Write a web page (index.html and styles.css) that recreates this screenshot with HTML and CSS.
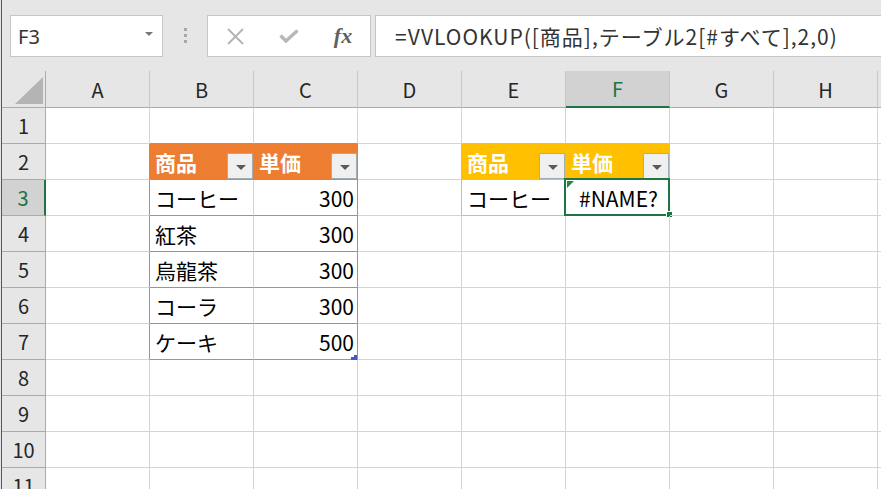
FILE: index.html
```html
<!doctype html>
<html lang="ja">
  <head>
    <meta charset="UTF-8" />
    <meta name="viewport" content="width=device-width, initial-scale=1.0" />
    <title>VLOOKUP</title>
    <link rel="stylesheet" href="styles.css">
  </head>

  <body>
    <div class="app">
      <div class="toolbar">
        <div class="name-box">
          <span>F3</span>
          <span class="caret"></span>
        </div>
        <div class="grip"><i></i><i></i><i></i></div>
        <div class="fx-buttons">
          <span class="fx-btn">
            <svg width="17" height="17" viewBox="0 0 17 17">
              <path d="M1 1 L16 16 M16 1 L1 16" stroke="#b3b3b3" stroke-width="1.8" fill="none" />
            </svg>
          </span>
          <span class="fx-btn">
            <svg width="20" height="14" viewBox="0 0 20 14">
              <path d="M1.5 6.5 L7 12 L18.5 1.5" stroke="#b8b8b8" stroke-width="3.4" fill="none" />
            </svg>
          </span>
          <span class="fx-btn fx-label">fx</span>
        </div>
        <div class="formula">=VVLOOKUP([商品],テーブル2[#すべて],2,0)</div>
      </div>

      <div class="sheet">
        <div class="row head">
          <div class="cell corner">
            <svg width="28" height="27" viewBox="0 0 28 27"><polygon points="28,0 28,27 0,27" fill="#b4b4b4" /></svg>
          </div>
          <div class="cell">A</div>
          <div class="cell">B</div>
          <div class="cell">C</div>
          <div class="cell">D</div>
          <div class="cell">E</div>
          <div class="cell col-active">F</div>
          <div class="cell">G</div>
          <div class="cell">H</div>
          <div class="cell"></div>
        </div>

        <div class="row">
          <div class="cell rh">1</div>
          <div class="cell"></div>
          <div class="cell ob"></div>
          <div class="cell ob"></div>
          <div class="cell"></div>
          <div class="cell yb"></div>
          <div class="cell yb"></div>
          <div class="cell"></div>
          <div class="cell"></div>
          <div class="cell"></div>
        </div>

        <div class="row">
          <div class="cell rh">2</div>
          <div class="cell or"></div>
          <div class="cell thead orange">商品<span class="filter"></span></div>
          <div class="cell thead orange">単価<span class="filter"></span></div>
          <div class="cell yr"></div>
          <div class="cell thead gold">商品<span class="filter"></span></div>
          <div class="cell thead gold">単価<span class="filter"></span></div>
          <div class="cell"></div>
          <div class="cell"></div>
          <div class="cell"></div>
        </div>

        <div class="row">
          <div class="cell rh row-active">3</div>
          <div class="cell or"></div>
          <div class="cell ob">コーヒー</div>
          <div class="cell ob or num">300</div>
          <div class="cell yr"></div>
          <div class="cell yb">コーヒー</div>
          <div class="cell yb yr center selected">
            #NAME?
            <span class="err"></span>
            <span class="sel"></span>
            <span class="tgrip"></span>
            <span class="handle"></span>
          </div>
          <div class="cell"></div>
          <div class="cell"></div>
          <div class="cell"></div>
        </div>

        <div class="row">
          <div class="cell rh">4</div>
          <div class="cell or"></div>
          <div class="cell ob">紅茶</div>
          <div class="cell ob or num">300</div>
          <div class="cell"></div>
          <div class="cell"></div>
          <div class="cell"></div>
          <div class="cell"></div>
          <div class="cell"></div>
          <div class="cell"></div>
        </div>

        <div class="row">
          <div class="cell rh">5</div>
          <div class="cell or"></div>
          <div class="cell ob">烏龍茶</div>
          <div class="cell ob or num">300</div>
          <div class="cell"></div>
          <div class="cell"></div>
          <div class="cell"></div>
          <div class="cell"></div>
          <div class="cell"></div>
          <div class="cell"></div>
        </div>

        <div class="row">
          <div class="cell rh">6</div>
          <div class="cell or"></div>
          <div class="cell ob">コーラ</div>
          <div class="cell ob or num">300</div>
          <div class="cell"></div>
          <div class="cell"></div>
          <div class="cell"></div>
          <div class="cell"></div>
          <div class="cell"></div>
          <div class="cell"></div>
        </div>

        <div class="row">
          <div class="cell rh">7</div>
          <div class="cell or"></div>
          <div class="cell ob">ケーキ</div>
          <div class="cell ob or num resizable">500<span class="resize"></span></div>
          <div class="cell"></div>
          <div class="cell"></div>
          <div class="cell"></div>
          <div class="cell"></div>
          <div class="cell"></div>
          <div class="cell"></div>
        </div>

        <div class="row">
          <div class="cell rh">8</div>
          <div class="cell"></div><div class="cell"></div><div class="cell"></div>
          <div class="cell"></div><div class="cell"></div><div class="cell"></div>
          <div class="cell"></div><div class="cell"></div><div class="cell"></div>
        </div>

        <div class="row">
          <div class="cell rh">9</div>
          <div class="cell"></div><div class="cell"></div><div class="cell"></div>
          <div class="cell"></div><div class="cell"></div><div class="cell"></div>
          <div class="cell"></div><div class="cell"></div><div class="cell"></div>
        </div>

        <div class="row">
          <div class="cell rh">10</div>
          <div class="cell"></div><div class="cell"></div><div class="cell"></div>
          <div class="cell"></div><div class="cell"></div><div class="cell"></div>
          <div class="cell"></div><div class="cell"></div><div class="cell"></div>
        </div>

        <div class="row">
          <div class="cell rh">11</div>
          <div class="cell"></div><div class="cell"></div><div class="cell"></div>
          <div class="cell"></div><div class="cell"></div><div class="cell"></div>
          <div class="cell"></div><div class="cell"></div><div class="cell"></div>
        </div>
      </div>
    </div>
  </body>
</html>
```

FILE: styles.css
```css
/* General styles */
body {
  margin: 0;
  width: 881px;
  height: 489px;
  overflow: hidden;
  background: #e6e6e6;
  font-family: 'Noto Sans CJK JP', sans-serif;
}

.app {
  margin-left: 1px;
  border-left: 1px solid #217346;
  height: 489px;
}

/* Formula bar */
.toolbar {
  height: 71px;
  box-sizing: border-box;
  padding-top: 15px;
  display: flex;
  align-items: flex-start;
}

.name-box {
  margin-left: 8px;
  width: 153px;
  height: 42px;
  box-sizing: border-box;
  background: #fff;
  border: 1px solid #c6c6c6;
  display: flex;
  align-items: center;
  justify-content: space-between;
  padding: 0 9px 0 7px;
  font-family: 'Noto Sans', sans-serif;
  font-size: 20px;
  color: #333;
}

.caret {
  width: 0;
  height: 0;
  border-left: 4px solid transparent;
  border-right: 4px solid transparent;
  border-top: 4px solid #777;
  margin-bottom: 4px;
}

.grip {
  width: 44px;
  height: 42px;
  box-sizing: border-box;
  padding-top: 13px;
  display: flex;
  flex-direction: column;
  align-items: center;
  gap: 3px;
}

.grip i {
  width: 3px;
  height: 3px;
  background: #a6a6a6;
}

.fx-buttons {
  width: 164px;
  height: 42px;
  box-sizing: border-box;
  background: #fff;
  border: 1px solid #c6c6c6;
  display: flex;
}

.fx-btn {
  flex: 1;
  display: flex;
  align-items: center;
  justify-content: center;
}

.fx-label {
  font-family: 'Liberation Serif', serif;
  font-style: italic;
  font-weight: bold;
  font-size: 22px;
  color: #606060;
}

.formula {
  flex: 1;
  margin-left: 4px;
  margin-right: -2px;
  height: 42px;
  box-sizing: border-box;
  background: #fff;
  border: 1px solid #c6c6c6;
  padding-left: 19px;
  display: flex;
  align-items: center;
  font-size: 21px;
  letter-spacing: 1px;
  color: #333;
  white-space: nowrap;
}

/* Sheet grid */
.sheet {
  background: #fff;
}

.row {
  display: grid;
  grid-template-columns: 44px repeat(9, 104px);
  height: 36px;
}

.row.head {
  height: 37px;
}

.cell {
  position: relative;
  box-sizing: border-box;
  border-right: 1px solid #d4d4d4;
  border-bottom: 1px solid #d4d4d4;
  display: flex;
  align-items: center;
  padding: 0 3px 0 5px;
  font-size: 21px;
  color: #000;
  white-space: nowrap;
}

.head .cell {
  background: #e6e6e6;
  border-right-color: #c6c6c6;
  border-bottom-color: #ababab;
  justify-content: center;
  padding: 0;
  font-size: 20px;
  color: #262626;
}

.head .corner {
  border-right-color: #ababab;
  justify-content: flex-end;
  align-items: flex-end;
  padding: 0 2px 3px 0;
}

.head .corner svg {
  display: block;
}

.head .col-active {
  background: #d2d2d2;
  color: #217346;
  border-bottom: 2px solid #217346;
}

.rh {
  background: #e6e6e6;
  border-right-color: #ababab;
  border-bottom-color: #ababab;
  justify-content: center;
  padding: 0;
  font-size: 20px;
  color: #262626;
}

.rh.row-active {
  background: #d2d2d2;
  color: #217346;
  border-right: 2px solid #217346;
}

.num {
  justify-content: flex-end;
}

.center {
  justify-content: center;
}

/* table outlines: o = orange table, y = gold table */
.or { border-right-color: #ed7d31; }
.ob { border-bottom-color: #ed7d31; }
.yr { border-right-color: #ffc000; }
.yb { border-bottom-color: #ffc000; }

.thead {
  justify-content: space-between;
  padding-right: 0;
  color: #fff;
  font-weight: bold;
}

.thead.orange {
  background: #ed7d31;
  border-color: #ed7d31;
}

.thead.gold {
  background: #ffc000;
  border-color: #ffc000;
}

.filter {
  align-self: flex-end;
  width: 26px;
  height: 26px;
  box-sizing: border-box;
  border: 1px solid #a3abb3;
  background: #f0f0f0;
  display: flex;
  align-items: center;
  justify-content: center;
}

.filter::after {
  content: '';
  margin: 2px 0 0 2px;
  border-left: 5px solid transparent;
  border-right: 5px solid transparent;
  border-top: 5px solid #5a5a5a;
}

/* active cell */
.err {
  position: absolute;
  top: 1px;
  left: 1px;
  border-top: 7px solid #1e8a37;
  border-right: 7px solid transparent;
}

.sel {
  position: absolute;
  top: -2px;
  left: -2px;
  right: -1px;
  bottom: -1px;
  border: 2px solid #217346;
}

.handle {
  position: absolute;
  right: -4px;
  bottom: -3px;
  width: 7px;
  height: 7px;
  box-sizing: border-box;
  background: #217346;
  border: 1px solid #fff;
}

.tgrip {
  position: absolute;
  right: 4px;
  bottom: 2px;
  width: 4px;
  height: 4px;
  background: radial-gradient(circle, #4559c0 45%, transparent 50%) 0 0 / 2px 2px;
}

.resize {
  position: absolute;
  right: 0;
  bottom: -1px;
  width: 6px;
  height: 5px;
  background: #4559c0;
  clip-path: polygon(50% 0, 100% 0, 100% 100%, 0 100%, 0 40%, 50% 40%);
}
```
